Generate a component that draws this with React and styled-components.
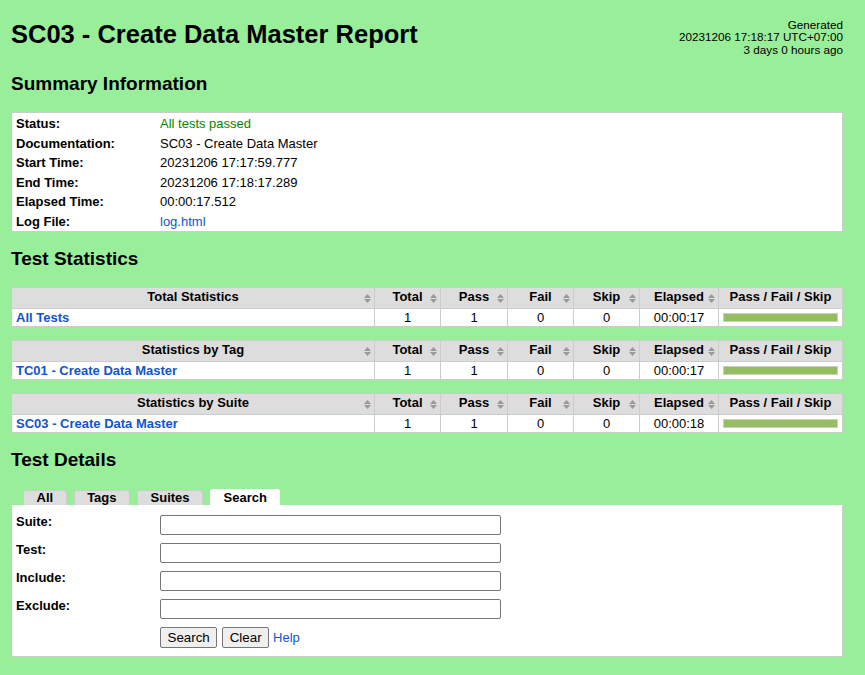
import styled, { createGlobalStyle } from 'styled-components';

const GlobalStyle = createGlobalStyle`
  html, body {
    margin: 0;
    padding: 0;
    background: #99ee99;
  }

  body {
    font-family: "Liberation Sans", Arial, Helvetica, sans-serif;
    font-size: 13px;
    color: #000;
  }
`;

const summary = [
  { label: 'Status:', value: 'All tests passed', kind: 'pass' },
  { label: 'Documentation:', value: 'SC03 - Create Data Master' },
  { label: 'Start Time:', value: '20231206 17:17:59.777' },
  { label: 'End Time:', value: '20231206 17:18:17.289' },
  { label: 'Elapsed Time:', value: '00:00:17.512' },
  { label: 'Log File:', value: 'log.html', kind: 'link' },
];

const statTables = [
  { title: 'Total Statistics', name: 'All Tests', elapsed: '00:00:17' },
  { title: 'Statistics by Tag', name: 'TC01 - Create Data Master', elapsed: '00:00:17' },
  { title: 'Statistics by Suite', name: 'SC03 - Create Data Master', elapsed: '00:00:18' },
];

const tabs = ['All', 'Tags', 'Suites', 'Search'];
const searchFields = ['Suite:', 'Test:', 'Include:', 'Exclude:'];

const SortIcon = () => (
  <SortMark width="7" height="9" viewBox="0 0 7 9">
    <polygon points="3.5,0 7,4 0,4" />
    <polygon points="0,5 7,5 3.5,9" />
  </SortMark>
);

const StatTable = ({ title, name, elapsed }) => (
  <StatGrid>
    <HeadCell>
      {title}
      <SortIcon />
    </HeadCell>
    <HeadCell>
      Total
      <SortIcon />
    </HeadCell>
    <HeadCell>
      Pass
      <SortIcon />
    </HeadCell>
    <HeadCell>
      Fail
      <SortIcon />
    </HeadCell>
    <HeadCell>
      Skip
      <SortIcon />
    </HeadCell>
    <HeadCell>
      Elapsed
      <SortIcon />
    </HeadCell>
    <HeadCell>Pass / Fail / Skip</HeadCell>

    <NameCell>
      <StatLink href="#">{name}</StatLink>
    </NameCell>
    <NumCell>1</NumCell>
    <NumCell>1</NumCell>
    <NumCell>0</NumCell>
    <NumCell>0</NumCell>
    <NumCell>{elapsed}</NumCell>
    <GraphCell>
      <Graph>
        <PassBar style={{ width: '100%' }} />
      </Graph>
    </GraphCell>
  </StatGrid>
);

const App = () => (
  <>
    <GlobalStyle />
    <Page>
      <Header>
        <Title>SC03 - Create Data Master Report</Title>
        <Generated>
          Generated
          <br />
          20231206 17:18:17 UTC+07:00
          <br />
          3 days 0 hours ago
        </Generated>
      </Header>

      <SectionTitle>Summary Information</SectionTitle>
      <SummaryBox>
        {summary.map((row) => (
          <SummaryRow key={row.label}>
            <SummaryLabel>{row.label}</SummaryLabel>
            <SummaryValue $kind={row.kind}>{row.value}</SummaryValue>
          </SummaryRow>
        ))}
      </SummaryBox>

      <SectionTitle>Test Statistics</SectionTitle>
      <StatList>
        {statTables.map((t) => (
          <StatTable key={t.title} {...t} />
        ))}
      </StatList>

      <SectionTitle>Test Details</SectionTitle>
      <TabBar>
        {tabs.map((tab) => (
          <Tab key={tab} $selected={tab === 'Search'}>
            {tab}
          </Tab>
        ))}
      </TabBar>
      <Panel>
        {searchFields.map((field) => (
          <FormRow key={field}>
            <FieldLabel>{field}</FieldLabel>
            <TextInput type="text" />
          </FormRow>
        ))}
        <ButtonRow>
          <span />
          <Actions>
            <Button type="button">Search</Button>
            <Button type="button">Clear</Button>
            <HelpLink href="#">Help</HelpLink>
          </Actions>
        </ButtonRow>
      </Panel>
    </Page>
  </>
);

export default App;

const Page = styled.div`
  width: 832px;
  padding: 0 0 20px 11px;
`;

const Header = styled.header`
  display: flex;
  justify-content: space-between;
  align-items: flex-start;
  padding-top: 19px;
  height: 38px;
`;

const Title = styled.h1`
  margin: 1px 0 0;
  font-size: 25.5px;
  line-height: 29px;
  font-weight: bold;
`;

const Generated = styled.div`
  text-align: right;
  font-size: 11.7px;
  line-height: 12.3px;
  white-space: nowrap;
`;

const SectionTitle = styled.h2`
  margin: 16px 0 17px;
  font-size: 19px;
  line-height: 22px;
  font-weight: bold;
`;

const SummaryBox = styled.div`
  background: #fff;
  border: 1px solid #ccc;
  padding: 1px 0 0;
`;

const SummaryRow = styled.div`
  display: grid;
  grid-template-columns: 144px 1fr;
  line-height: 15.5px;
`;

const SummaryLabel = styled.div`
  padding: 2px 4px;
  font-weight: bold;
  white-space: nowrap;
`;

const SummaryValue = styled.div`
  padding: 2px 4px;
  color: ${(p) => (p.$kind === 'pass' ? '#008800' : p.$kind === 'link' ? '#1155cc' : '#000')};
`;

const StatList = styled.div`
  display: flex;
  flex-direction: column;
  gap: 13px;
`;

const StatGrid = styled.div`
  display: grid;
  grid-template-columns: 363px 66px 67px 66px 66px 79px 124px;
  border-top: 1px solid #ccc;
  border-left: 1px solid #ccc;
`;

const HeadCell = styled.div`
  position: relative;
  background: #ddd;
  border-right: 1px solid #ccc;
  border-bottom: 1px solid #ccc;
  padding: 2px 4px 4px;
  line-height: 14px;
  font-weight: bold;
  text-align: center;
  white-space: nowrap;
`;

const SortMark = styled.svg`
  position: absolute;
  right: 3px;
  top: 50%;
  margin-top: -4px;
  fill: #999;
`;

const BodyCell = styled.div`
  background: #fff;
  border-right: 1px solid #ccc;
  border-bottom: 1px solid #ccc;
  padding: 1px 4px;
  line-height: 15px;
  white-space: nowrap;
`;

const NameCell = styled(BodyCell)`
  text-align: left;
`;

const NumCell = styled(BodyCell)`
  text-align: center;
`;

const GraphCell = styled(BodyCell)`
  display: flex;
  align-items: center;
`;

const StatLink = styled.a`
  color: #1155cc;
  font-weight: bold;
  text-decoration: none;
`;

const Graph = styled.div`
  flex: 1;
  height: 7px;
  border: 1px solid #ccc;
  background: #f4f4f4;
  display: flex;
`;

const PassBar = styled.div`
  height: 100%;
  background: #97bd61;
`;

const TabBar = styled.div`
  display: flex;
  align-items: flex-end;
  gap: 7px;
  padding-left: 12px;
  margin-top: 18px;
`;

const Tab = styled.div`
  box-sizing: border-box;
  height: ${(p) => (p.$selected ? '16px' : '15px')};
  padding: ${(p) => (p.$selected ? '1px 12.5px 0' : '0 12.5px')};
  background: ${(p) => (p.$selected ? '#fff' : '#ddd')};
  border: 1px solid ${(p) => (p.$selected ? '#fff' : '#ccc')};
  border-bottom: 0;
  border-radius: 3px 3px 0 0;
  font-weight: bold;
  line-height: 14px;
  cursor: pointer;
`;

const Panel = styled.div`
  background: #fff;
  border: 1px solid #ccc;
  border-top-color: #fff;
  padding: 7px 0 8px;
`;

const FormRow = styled.div`
  display: grid;
  grid-template-columns: 148px 341px;
  height: 28px;
`;

const ButtonRow = styled(FormRow)`
  height: 23px;
`;

const FieldLabel = styled.div`
  padding: 1px 4px 0;
  font-weight: bold;
  line-height: 15px;
`;

const TextInput = styled.input`
  box-sizing: border-box;
  margin: 2px 0 0;
  width: 341px;
  height: 20px;
  border: 1px solid #767676;
  border-radius: 2px;
  background: #fff;
  padding: 1px 2px;
  font: 13px "Liberation Sans", Arial, sans-serif;
`;

const Actions = styled.div`
  display: flex;
  align-items: center;
  gap: 5px;
  margin-top: 2px;
  height: 21px;
  white-space: nowrap;
`;

const Button = styled.button`
  box-sizing: border-box;
  height: 21px;
  padding: 1px 6.5px;
  border: 1px solid #767676;
  border-radius: 2px;
  background: #efefef;
  color: #000;
  font: 13.33px "Liberation Sans", Arial, sans-serif;
  line-height: 17px;
`;

const HelpLink = styled.a`
  margin-left: -1px;
  color: #1155cc;
  text-decoration: none;
  line-height: 15px;
`;
